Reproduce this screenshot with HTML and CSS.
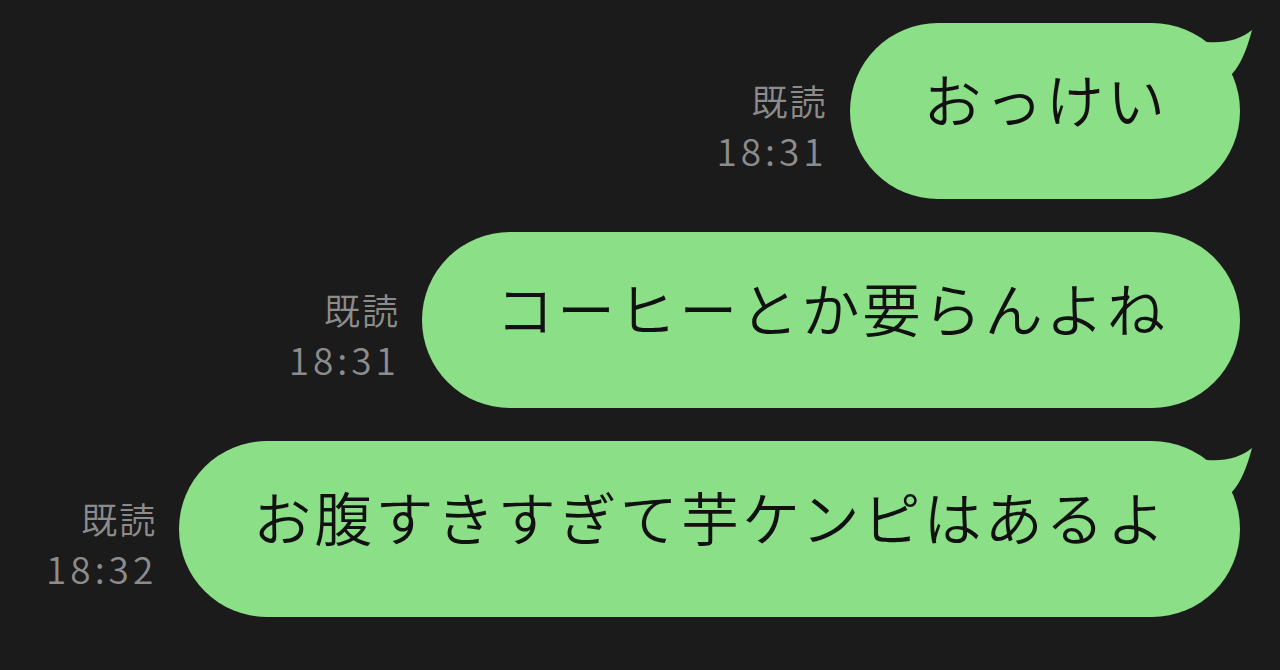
FILE: index.html
```html
<!DOCTYPE html>
<html lang="ja">
<head>
  <meta charset="UTF-8">
  <title>トーク</title>
  <link rel="stylesheet" href="styles.css">
</head>
<body>

  <div class="talk">

    <div class="row">
      <div class="meta">
        <span class="read">既読</span>
        <span class="time">18:31</span>
      </div>
      <div class="bubble">
        おっけい
        <svg class="tail" width="60" height="70" viewBox="0 0 60 70"><path d="M0 40 L12 19 Q40 21 57 7 Q49 38 37 51 L20 60 Z"/></svg>
      </div>
    </div>

    <div class="row">
      <div class="meta">
        <span class="read">既読</span>
        <span class="time">18:31</span>
      </div>
      <div class="bubble">コーヒーとか要らんよね</div>
    </div>

    <div class="row">
      <div class="meta">
        <span class="read">既読</span>
        <span class="time">18:32</span>
      </div>
      <div class="bubble">
        お腹すきすぎて芋ケンピはあるよ
        <svg class="tail" width="60" height="70" viewBox="0 0 60 70"><path d="M0 40 L12 19 Q40 21 57 7 Q49 38 37 51 L20 60 Z"/></svg>
      </div>
    </div>

  </div>

</body>
</html>
```

FILE: styles.css
```css
body {
  margin: 0;
  background-color: #1b1b1b;
  font-family: "Noto Sans CJK JP", "Noto Sans", sans-serif;
}

.talk {
  display: flex;
  flex-direction: column;
  gap: 33px;
  padding: 23px 40px 0 0;
}

.row {
  display: flex;
  justify-content: flex-end;
  align-items: flex-end;
  gap: 22px;
}

.meta {
  display: flex;
  flex-direction: column;
  align-items: flex-end;
  color: #8c8c8c;
  margin-bottom: 24px;
  font-weight: 350;
}

.read {
  font-size: 36px;
  line-height: 50px;
  letter-spacing: 2px;
}

.time {
  font-size: 37px;
  line-height: 50px;
  letter-spacing: 4px;
}

.bubble {
  position: relative;
  box-sizing: border-box;
  height: 176px;
  padding: 33px 72px 0 74px;
  border-radius: 88px;
  background-color: #8be087;
  color: #111;
  font-size: 58px;
  font-weight: 350;
  line-height: 84px;
  letter-spacing: 3.1px;
  white-space: nowrap;
}

.tail {
  position: absolute;
  top: 0;
  right: -15px;
}

.tail path {
  fill: #8be087;
}
```
